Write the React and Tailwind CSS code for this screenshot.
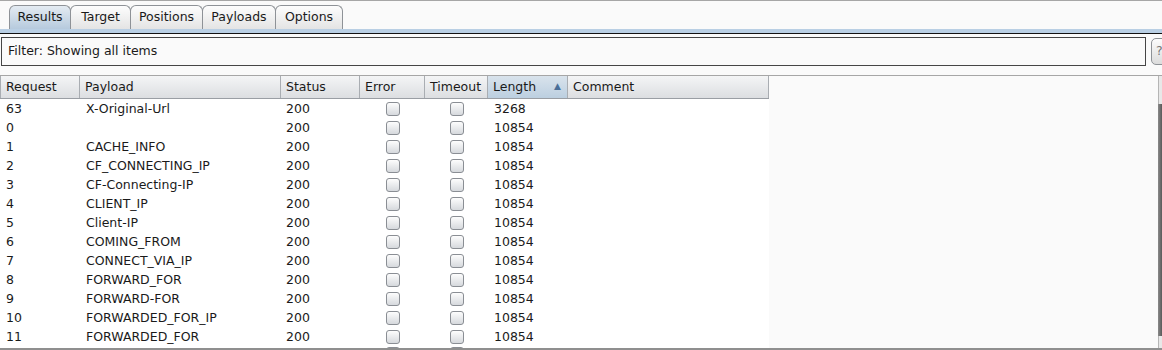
const COLS = [
  { key: 'req', label: 'Request', w: 80 },
  { key: 'payload', label: 'Payload', w: 201 },
  { key: 'status', label: 'Status', w: 79 },
  { key: 'error', label: 'Error', w: 65 },
  { key: 'timeout', label: 'Timeout', w: 63 },
  { key: 'length', label: 'Length', w: 80, sorted: true },
  { key: 'comment', label: 'Comment', w: 201 },
];

const ROWS = [
  ['63', 'X-Original-Url', '3268'],
  ['0', '', '10854'],
  ['1', 'CACHE_INFO', '10854'],
  ['2', 'CF_CONNECTING_IP', '10854'],
  ['3', 'CF-Connecting-IP', '10854'],
  ['4', 'CLIENT_IP', '10854'],
  ['5', 'Client-IP', '10854'],
  ['6', 'COMING_FROM', '10854'],
  ['7', 'CONNECT_VIA_IP', '10854'],
  ['8', 'FORWARD_FOR', '10854'],
  ['9', 'FORWARD-FOR', '10854'],
  ['10', 'FORWARDED_FOR_IP', '10854'],
  ['11', 'FORWARDED_FOR', '10854'],
];

const TABS = [
  { label: 'Results', w: 'w-[62px]' },
  { label: 'Target', w: 'w-[61px]' },
  { label: 'Positions', w: 'w-[73px]' },
  { label: 'Payloads', w: 'w-[74px]' },
  { label: 'Options', w: 'w-[68px]' },
];

function Check() {
  return (
    <span className="inline-block w-[14px] h-[14px] rounded-[3px] border border-[#8a8e94] bg-gradient-to-b from-[#fdfdfd] to-[#d6d9dd]" />
  );
}

export default function App() {
  return (
    <div
      className="w-[1162px] h-[350px] overflow-hidden bg-[#fafafa] text-[12.5px] text-[#1a1a1a] relative"
      style={{ fontFamily: '"DejaVu Sans", Verdana, sans-serif' }}
    >
      <div className="h-px bg-[#a6a6a6]" />

      {/* Tabs */}
      <div className="flex items-end pl-[9px] pt-[4px] h-[28px]">
        {TABS.map((t, i) => (
          <div
            key={t.label}
            className={`${t.w} h-[24px] flex items-center justify-center border border-b-0 border-[#8e9297] rounded-t-[6px] -mr-px ${
              i === 0
                ? 'bg-gradient-to-b from-[#e4ebf2] to-[#b6cadd] text-[#1a1a1a]'
                : 'bg-gradient-to-b from-[#fdfdfd] to-[#e4e4e4]'
            }`}
          >
            {t.label}
          </div>
        ))}
      </div>
      <div className="h-[4px] bg-[#b9cfe4]" />
      <div className="h-[1px] bg-[#111]" />

      {/* Filter */}
      <div className="flex items-center mt-[3px] pl-[1px] h-[29px]">
        <div className="shrink-0 w-[1145px] h-[29px] border border-[#454545] flex items-center px-[6px]">
          Filter: Showing all items
        </div>
        <div className="shrink-0 ml-[5px] w-[20px] h-[27px] rounded-[5px] border border-[#8e9297] bg-gradient-to-b from-[#fcfcfc] to-[#dcdcdc] flex items-center pl-[4px] text-[#777]">
          ?
        </div>
      </div>

      {/* Table */}
      <div className="mt-[9px] h-px bg-[#a6a6a6]" />
      <div className="flex h-[274px]">
        <div className="w-[769px] bg-white">
          <div className="flex h-[23px] border-b border-[#9a9ea4]">
            {COLS.map((c, i) => (
              <div
                key={c.key}
                style={{ width: c.w }}
                className={`flex items-center px-[5px] border-r border-[#a9adb2] ${
                  i === 0 ? 'border-l' : ''
                } ${
                  c.sorted
                    ? 'bg-gradient-to-b from-[#d9e3ec] to-[#bccfe0]'
                    : 'bg-gradient-to-b from-[#f4f5f6] to-[#dcdee1]'
                }`}
              >
                <span className="flex-1">{c.label}</span>
                {c.sorted && <span className="text-[9px] text-[#4a6f98] mr-[1px]">▲</span>}
              </div>
            ))}
          </div>
          {ROWS.map(([req, payload, len], r) => (
            <div key={r} className="flex h-[19px] items-center pt-px">
              <div style={{ width: 80 }} className="pl-[6px]">{req}</div>
              <div style={{ width: 201 }} className="pl-[6px]">{payload}</div>
              <div style={{ width: 79 }} className="pl-[5px]">200</div>
              <div style={{ width: 65 }} className="flex justify-center"><Check /></div>
              <div style={{ width: 63 }} className="flex justify-center"><Check /></div>
              <div style={{ width: 80 }} className="pl-[6px]">{len}</div>
              <div style={{ width: 201 }} />
            </div>
          ))}
          {/* partly hidden next row */}
          <div className="flex h-[19px] items-start pt-px">
            <div className="w-[360px]" />
            <div className="w-[65px] flex justify-center"><Check /></div>
            <div className="w-[63px] flex justify-center"><Check /></div>
          </div>
        </div>
        <div className="flex-1" />
        <div className="w-[4px] flex flex-col">
          <div className="h-[28px] bg-[#e8e8e8] border-l border-[#b5b5b5]" />
          <div className="flex-1 bg-gradient-to-r from-[#8a8a8a] to-[#5a5a5a]" />
          <div className="h-[14px] bg-[#e8e8e8] border-l border-[#b5b5b5]" />
        </div>
      </div>
      <div className="absolute left-0 right-0 bottom-0 h-[2px] bg-[#8f8f8f]" />
    </div>
  );
}
